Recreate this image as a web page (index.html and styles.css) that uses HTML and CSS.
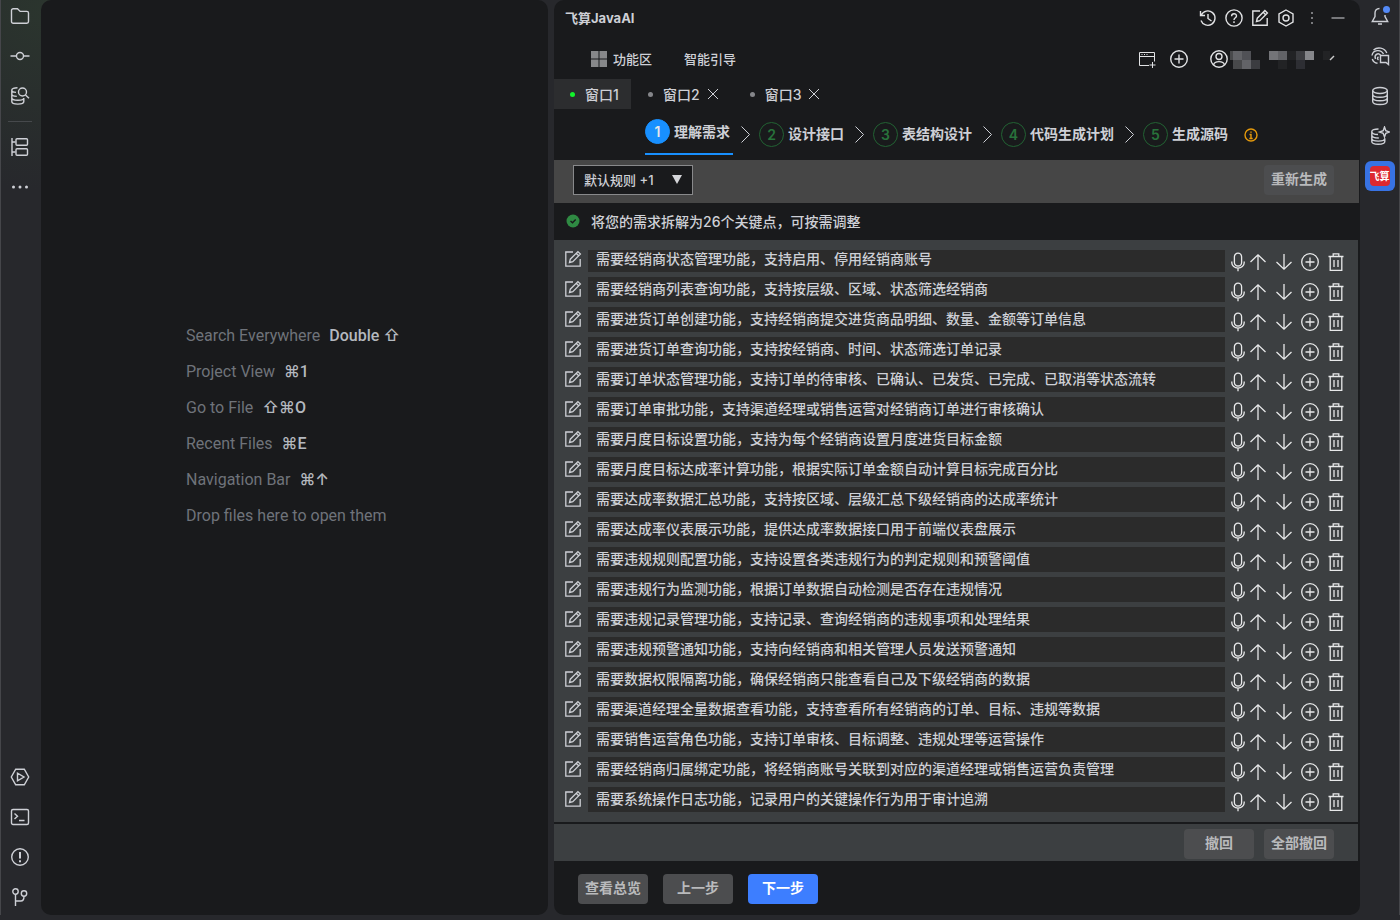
FILE: index.html
```html
<!DOCTYPE html>
<html lang="zh-CN">

<head>
    <meta charset="UTF-8">
    <meta name="viewport" content="width=device-width, initial-scale=1.0">
    <title>飞算JavaAI</title>
    <link rel="stylesheet" href="styles.css">
</head>

<body>
    <!-- icons -->
    <svg class="sprite" aria-hidden="true">
        <symbol id="i-edit" viewBox="0 0 18 18">
            <path d="M9 2H1.8v14.2h14.4V9" />
            <path d="M5.5 12.5l.8-3.3 7.6-7.6 2.5 2.5-7.6 7.6zM12.2 3.3l2.5 2.5" />
        </symbol>
        <symbol id="i-mic" viewBox="0 0 14 20">
            <rect x="3.4" y="1.2" width="7.2" height="12.8" rx="3.6" />
            <path d="M.8 9.5v1.2a6.2 5.4 0 0 0 12.4 0V9.5M7 16v3.2" />
        </symbol>
        <symbol id="i-up" viewBox="0 0 18 18">
            <path d="M9 17V2M1.5 9L9 1.8 16.5 9" />
        </symbol>
        <symbol id="i-down" viewBox="0 0 18 18">
            <path d="M9 1v15M1.5 9L9 16.2 16.5 9" />
        </symbol>
        <symbol id="i-plus" viewBox="0 0 18 18">
            <circle cx="9" cy="9" r="8.3" />
            <path d="M9 4.5v9M4.5 9h9" />
        </symbol>
        <symbol id="i-trash" viewBox="0 0 18 20">
            <path d="M1.5 4.5h15M3.2 4.5v13.8h11.6V4.5M6.2 4.5V1.8h5.6v2.7M7 8v7M11 8v7" />
        </symbol>
        <symbol id="i-arrow" viewBox="0 0 9 17">
            <path d="M.5.5l8 8-8 8" />
        </symbol>
        <symbol id="i-close" viewBox="0 0 12 12">
            <path d="M1 1l10 10M11 1L1 11" />
        </symbol>
    </svg>

    <div class="ide">
        <nav class="side left">
            <div class="group">
                <button aria-label="Project"><svg viewBox="0 0 20 20"><path d="M1.5 15.5v-11A1.7 1.7 0 0 1 3.2 2.8h4.3l2.7 2.6h6.6a1.7 1.7 0 0 1 1.7 1.7v8.4a1.7 1.7 0 0 1-1.7 1.7H3.2a1.7 1.7 0 0 1-1.7-1.7z" /></svg></button>
                <button aria-label="Commit"><svg viewBox="0 0 20 20"><circle cx="10" cy="10" r="3.5" /><path d="M.5 10h6M13.5 10h6" /></svg></button>
                <button aria-label="Database Search"><svg viewBox="0 0 20 20"><path d="M7.5 1.8C4 1.8 1.8 2.8 1.8 4v11.5c0 1.5 2.5 2.6 6 2.6s6-1.1 6-2.6v-3.3M1.8 4.2c0 1.2 1.7 2 4.2 2.2M1.8 8c0 1.2 2 2.2 5 2.4M1.8 11.7c0 1.5 2.5 2.5 6 2.5s6-1 6-2.3" /><circle cx="12.5" cy="6" r="4" /><path d="M15.5 9l3.500 3.300" /></svg></button>
                <hr>
                <button aria-label="Structure"><svg viewBox="0 0 20 20"><path d="M2 1v18M2 5h3.5M2 15h3.5" /><rect x="6" y="1.8" width="11.5" height="6.5" rx="1" /><rect x="6" y="11.7" width="11.5" height="6.5" rx="1" /></svg></button>
                <button aria-label="More"><svg viewBox="0 0 20 20"><g class="solid"><circle cx="3.5" cy="10" r="1.5" /><circle cx="10" cy="10" r="1.5" /><circle cx="16.5" cy="10" r="1.5" /></g></svg></button>
            </div>
            <div class="group">
                <button aria-label="Services"><svg viewBox="0 0 20 20"><path d="M5.7 2.2h8.6L18.7 10l-4.4 7.8H5.7L1.3 10zM7.5 6.2v7.6L14 10z" /></svg></button>
                <button aria-label="Terminal"><svg viewBox="0 0 20 20"><rect x="1.5" y="2.5" width="17" height="15" rx="1.5" /><path d="M4.5 6.5L7.5 9.2l-3 2.7M9 13.5h5.5" /></svg></button>
                <button aria-label="Problems"><svg viewBox="0 0 20 20"><circle cx="10" cy="10" r="8.3" /><path d="M10 5v6.5M10 13.2v2" class="thick" /></svg></button>
                <button aria-label="Git"><svg viewBox="0 0 20 20"><circle cx="5.5" cy="4.5" r="2.7" /><circle cx="14" cy="6.5" r="2.7" /><path d="M5.5 7.2V19M5.5 14h5.3c2 0 3.2-1.2 3.2-4.8" /></svg></button>
            </div>
        </nav>

        <main class="editor">
            <ul class="tips">
                <li>Search Everywhere <kbd>Double ⇧</kbd></li>
                <li>Project View <kbd>⌘1</kbd></li>
                <li>Go to File <kbd>⇧⌘O</kbd></li>
                <li>Recent Files <kbd>⌘E</kbd></li>
                <li>Navigation Bar <kbd>⌘↑</kbd></li>
                <li>Drop files here to open them</li>
            </ul>
        </main>

        <section class="panel">
            <header class="title">
                <h1>飞算JavaAI</h1>
                <div class="tools">
                    <button aria-label="历史"><svg viewBox="0 0 18 18"><path d="M2.3 6A7.2 7.2 0 1 1 2 11.5M1.5 2v4.5H6M9 5v4.5l3.5 2.5" /></svg></button>
                    <button aria-label="帮助"><svg viewBox="0 0 18 18"><circle cx="9" cy="9" r="8.1" /><path d="M6.6 7.2c0-3.4 4.9-3.2 4.9-.2 0 1.7-2.5 1.8-2.5 3.9M9 12.3v1.6" /></svg></button>
                    <button aria-label="编辑"><svg><use href="#i-edit" /></svg></button>
                    <button aria-label="设置"><svg viewBox="0 0 18 18"><path d="M9 1l7 3.8v8.4L9 17l-7-3.8V4.8z" /><circle cx="9" cy="9" r="3" /></svg></button>
                    <button aria-label="更多"><svg viewBox="0 0 18 18"><g class="solid dim"><circle cx="9" cy="4" r="1" /><circle cx="9" cy="9" r="1" /><circle cx="9" cy="14" r="1" /></g></svg></button>
                    <button aria-label="最小化"><svg viewBox="0 0 18 18"><path class="dimline" d="M2.5 9h13" /></svg></button>
                </div>
            </header>

            <div class="menu">
                <button class="area"><svg class="squares" viewBox="0 0 16 16"><path d="M0 0h7.5v7.5H0zM8.5 0H16v7.5H8.5zM0 8.5h7.5V16H0zM8.5 8.5H16V16H8.5z" /></svg>功能区</button>
                <button>智能引导</button>
                <div class="account">
                    <button aria-label="新建窗口"><svg class="thin" viewBox="0 0 18 18"><path d="M11 15.5H1.5v-13h15v9M1.5 6.5h15M3.5 4.5h1M6 4.5h1M8.5 4.5h1M14.5 12v6M11.500 15h6" /></svg></button>
                    <button aria-label="新增"><svg><use href="#i-plus" /></svg></button>
                    <button class="user" aria-label="账户">
                        <svg viewBox="0 0 18 18"><circle cx="9" cy="9" r="8.2" /><circle cx="9" cy="6.5" r="3" /><path d="M3.5 15c1-4.5 10-4.5 11 0" /></svg>
                        <svg class="mosaic" viewBox="0 0 105 18">
                            <path fill="#48494b" d="M0 0h3v9H0zM3 9h9v9H3z" />
                            <path fill="#626367" d="M3 0h9v9H3zM12 9h9v9h-9zM48 0h9v9h-9z" />
                            <path fill="#505156" d="M12 0h9v9h-9z" />
                            <path fill="#3b3c40" d="M21 9h9v9h-9zM66 0h9v9h-9z" />
                            <path fill="#737478" d="M39 0h9v9h-9z" />
                            <path fill="#222325" d="M57 0h9v9h-9zM48 9h9v9h-9zM93 0h7v9h-7z" />
                            <path fill="#2d2e33" d="M66 9h9v9h-9z" />
                            <path fill="#85868a" d="M75 0h9v9h-9z" />
                            <path d="M100 9l4-4" stroke="#ccc" />
                        </svg>
                    </button>
                </div>
            </div>

            <div class="tabs">
                <button class="tab active"><i></i>窗口1</button>
                <button class="tab"><i></i>窗口2<svg><use href="#i-close" /></svg></button>
                <button class="tab"><i></i>窗口3<svg><use href="#i-close" /></svg></button>
            </div>

            <div class="steps">
                <div class="step current"><b>1</b>理解需求</div>
                <svg class="arrow"><use href="#i-arrow" /></svg>
                <div class="step"><b>2</b><span>设计接口</span></div>
                <svg class="arrow"><use href="#i-arrow" /></svg>
                <div class="step"><b>3</b><span>表结构设计</span></div>
                <svg class="arrow"><use href="#i-arrow" /></svg>
                <div class="step"><b>4</b><span>代码生成计划</span></div>
                <svg class="arrow"><use href="#i-arrow" /></svg>
                <div class="step"><b>5</b><span>生成源码</span></div>
                <svg class="info" viewBox="0 0 14 14"><circle cx="7" cy="7" r="6" /><path d="M7 3.5v1.3M5.5 6.500H7v4M5.300 10.500h3.400" /></svg>
            </div>

            <div class="rules">
                <button class="select" aria-haspopup="listbox">默认规则 +1<span></span></button>
                <button class="btn faded">重新生成</button>
            </div>

            <div class="status">
                <svg viewBox="0 0 14 14"><circle cx="7" cy="7" r="6.5" /><path d="M4.5 7l2 1.8 3.2-3.3" /></svg>
                将您的需求拆解为26个关键点，可按需调整
            </div>

            <div class="listbox">
                <ul id="list"></ul>
            </div>

            <div class="undo">
                <button class="btn">撤回</button>
                <button class="btn">全部撤回</button>
            </div>

            <footer>
                <button class="btn">查看总览</button>
                <button class="btn">上一步</button>
                <button class="btn primary">下一步</button>
            </footer>
        </section>

        <nav class="side right">
            <div class="group">
                <button class="bell" aria-label="Notifications"><svg viewBox="0 0 20 20"><path d="M9.5 2.5C6.5 2.5 5 4.5 5 7v3.5L2.3 15.5h15.4L15 10.5V9M8 18h4" /></svg></button>
                <button aria-label="AI Assistant"><svg viewBox="0 0 20 20"><path d="M3.5 4C7.500.500 14.500 1.500 16.800 7M2 9.500C3 3.500 11 3 13.500 8M2.300 13c.8 2.500 2.700 4 5.200 4.300M5.500 13C3.800 9 8 6 10.500 9M8.500 14c-1.500-1-1.200-2.500 0-3" /><path d="M10.500 9.500h8v9l-2.500-2h-5.500z" /></svg></button>
                <button aria-label="Database"><svg viewBox="0 0 20 20"><ellipse cx="10" cy="4.5" rx="7.3" ry="3" /><path d="M2.7 4.5v11c0 4 14.6 4 14.6 0v-11M2.7 8.2c0 4 14.6 4 14.6 0M2.7 11.8c0 4 14.6 4 14.6 0" /></svg></button>
                <button aria-label="Database AI"><svg viewBox="0 0 20 20"><path d="M8.5 3C4.5 3 1.8 4 1.8 5.500v10c0 3.700 13 3.700 13 0v-3.200M1.800 5.500c0 2 3 3 6.200 3M1.800 9c0 2 3.500 3 7 3M1.800 12.500c0 3.500 13 3.500 13 0M14.500 1l1.300 3.700 3.700 1.300-3.700 1.300-1.300 3.700-1.300-3.700L9.500 6l3.700-1.300z" /></svg></button>
                <button class="logo" aria-label="飞算JavaAI"><span>飞算</span></button>
            </div>
        </nav>
    </div>

    <script src="script.js"></script>
</body>

</html>
```

FILE: styles.css
```css
* {
    box-sizing: border-box;
}

body {
    margin: 0;
    color: #ced0d6;
    background-color: #27282c;
    font-family: Inter, "Noto Sans CJK SC", sans-serif;
    font-size: 14px;
    font-weight: 500;
}

button {
    padding: 0;
    border: none;
    background: none;
    color: inherit;
    font: inherit;
    cursor: pointer;
}

svg {
    display: block;
    fill: none;
    stroke: currentColor;
    stroke-width: 1.4;
}

ul {
    margin: 0;
    padding: 0;
    list-style: none;
}

.sprite {
    position: absolute;
    width: 0;
    height: 0;
}

.solid {
    fill: currentColor;
    stroke: none;
}

.dim {
    fill: #9a9b9e;
}

.dimline {
    stroke: #77787b;
    stroke-width: 2;
}

.thick {
    stroke-width: 2;
}

.ide {
    display: grid;
    grid-template-columns: 41px 507fr 812fr 40px;
    min-height: 100vh;
    padding-bottom: 5px;
    background: radial-gradient(circle at 45px 10px, #2b352e 0, #27282c 180px);
}

/* side bars */
.side {
    display: flex;
    flex-direction: column;
    justify-content: space-between;
}

.left {
    border-left: 1px solid #45464a;
    padding-right: 2px;
}

.right {
    border-right: 1px solid #45464a;
}

.group {
    display: flex;
    flex-direction: column;
    align-items: center;
    gap: 10px;
    padding-top: 1px;
}

.left .group:last-child {
    padding-bottom: 3px;
}

.side button {
    display: flex;
    align-items: center;
    justify-content: center;
    width: 30px;
    height: 30px;
}

.side svg {
    width: 20px;
    height: 20px;
}

.side hr {
    width: 24px;
    height: 1px;
    margin: 0;
    border: none;
    background-color: #46494c;
}

.bell {
    position: relative;
}

.bell::after {
    content: "";
    position: absolute;
    top: 5px;
    right: 5px;
    width: 7px;
    height: 7px;
    border-radius: 50%;
    background-color: #548af7;
}

.side .logo {
    border-radius: 6px;
    background-color: #3873e4;
}

.logo span {
    width: 20px;
    height: 20px;
    border-radius: 4px;
    background-color: #dd2930;
    color: white;
    font-size: 10px;
    font-weight: bold;
    line-height: 20px;
}

/* editor */
.editor {
    display: flex;
    align-items: center;
    justify-content: center;
    border-radius: 10px;
    background-color: #191a1c;
}

.tips {
    padding-bottom: 64px;
    width: 217px;
    color: #6f737a;
    font-family: Roboto, Inter, sans-serif;
    font-size: 16px;
    font-weight: normal;
    line-height: 36px;
    white-space: nowrap;
}

.tips kbd {
    margin-left: 5px;
    color: #b4b8bf;
    font-family: inherit;
    font-weight: 500;
}

/* plugin panel */
.panel {
    display: flex;
    flex-direction: column;
    margin-left: 6px;
    border-radius: 10px;
    background-color: #191a1c;
    overflow: hidden;
}

.title {
    display: flex;
    align-items: center;
    justify-content: space-between;
    height: 36px;
    padding: 0 13px 0 11px;
}

h1 {
    margin: 0;
    padding-bottom: 2px;
    font-size: 13px;
}

.tools,
.account {
    color: #e1e2e4;
}

.tools {
    display: flex;
    gap: 8px;
}

.tools svg,
.account svg {
    width: 18px;
    height: 18px;
}

.menu {
    display: flex;
    align-items: center;
    gap: 32px;
    height: 43px;
    padding: 2px 25px 0 37px;
    font-size: 13px;
}

.area {
    display: flex;
    align-items: center;
    gap: 6px;
}

.squares {
    width: 16px;
    height: 16px;
    fill: #87888a;
    stroke: none;
}

.account {
    display: flex;
    gap: 14px;
    margin-left: auto;
}

.account .thin {
    stroke-width: 1;
}

.user {
    display: flex;
    align-items: center;
    gap: 2px;
    margin-left: 8px;
}

.account .mosaic {
    width: 105px;
    height: 18px;
    margin-top: 3px;
    stroke: none;
}

.tabs {
    display: flex;
    gap: 17px;
    height: 30px;
}

.tab {
    display: flex;
    align-items: center;
}

.tab.active {
    width: 77px;
    padding-left: 16px;
    background-color: #2c2d2f;
}

.tab i {
    width: 5px;
    height: 5px;
    margin-right: 10px;
    border-radius: 50%;
    background-color: #85868a;
}

.tab.active i {
    background-color: #12f32b;
}

.tab svg {
    width: 12px;
    height: 12px;
    margin: 0 14px 0 7px;
    stroke-width: 1;
}

.steps {
    display: flex;
    align-items: center;
    justify-content: center;
    height: 51px;
    padding-right: 11px;
    font-weight: bold;
}

.step {
    display: flex;
    align-items: center;
    gap: 4px;
    padding-right: 3px;
}

.step span {
    padding-bottom: 3px;
}

.step b {
    width: 25px;
    height: 25px;
    border: 1px solid #226233;
    border-radius: 50%;
    color: #28733b;
    font-weight: 600;
    line-height: 23px;
    text-align: center;
}

.step.current {
    align-self: flex-end;
    height: 46px;
    margin-bottom: 5px;
    border-bottom: 2px solid #1890ff;
}

.step.current b {
    border-color: #1890ff;
    background-color: #1890ff;
    color: #e4e6ea;
}

.arrow {
    width: 9px;
    height: 17px;
    margin: 0 9px 0 8px;
    stroke-width: 1;
}

.info {
    width: 14px;
    height: 14px;
    margin-left: 13px;
    stroke: #e59a0c;
}

.rules {
    display: flex;
    align-items: center;
    justify-content: space-between;
    height: 43px;
    margin-right: 1px;
    padding: 0 25px 3px 19px;
    background-color: #464646;
}

.select {
    display: flex;
    align-items: center;
    justify-content: space-between;
    width: 120px;
    height: 30px;
    padding: 0 10px 2px;
    border: 1px solid #88898b;
    background-color: #191a1c;
    font-size: 13px;
}

.select span {
    border: 5px solid transparent;
    border-top: 9px solid #d5d6d9;
    border-bottom: none;
}

.btn {
    width: 70px;
    height: 30px;
    padding-bottom: 4px;
    border-radius: 4px;
    background-color: #4c4d4f;
    color: #b9babc;
    font-weight: bold;
}

.btn.primary {
    background-color: #3d7eff;
    color: white;
}

.status {
    display: flex;
    align-items: center;
    gap: 11px;
    height: 37px;
    padding: 0 0 2px 12px;
}

.status svg {
    width: 14px;
    height: 14px;
}

.status circle {
    fill: #2f8a43;
    stroke: none;
}

.status path {
    stroke: #191a1c;
}

/* requirements */
.listbox {
    flex: 1;
    margin: 0 2px 2px 0;
    padding: 10px 13px 10px 10px;
    background-color: #3c3f41;
}

#list {
    overflow: hidden;
}

/* the list is scrolled by a few pixels */
#list li:first-child {
    margin-top: -3px;
}

#list li {
    display: flex;
    align-items: center;
    height: 25px;
    margin-bottom: 5px;
}

#list li:last-child {
    margin-bottom: 0;
}

#list input {
    flex: 1;
    min-width: 0;
    height: 25px;
    margin: 0 6px;
    padding: 0 8px 3px;
    border: none;
    outline: none;
    background-color: #2b2b2b;
    color: inherit;
    font: inherit;
}

#list svg {
    width: 18px;
    height: 18px;
    stroke-width: 1.3;
}

#list .edit {
    padding-bottom: 2px;
}

#list .actions {
    display: flex;
    align-items: center;
    gap: 8px;
    padding-top: 5px;
    color: #e8e9ea;
}

#list .mic {
    margin-right: -4px;
}

#list .mic svg {
    width: 14px;
    height: 20px;
}

#list .trash svg {
    height: 20px;
}

.undo {
    display: flex;
    justify-content: flex-end;
    gap: 10px;
    height: 37px;
    margin-right: 2px;
    padding: 5px 24px 0 0;
    background-color: #3c3f41;
}

footer {
    display: flex;
    gap: 15px;
    height: 54px;
    padding: 13px 0 0 24px;
}
```

FILE: script.js
```js
const list = document.getElementById('list');

const items = [
    '需要经销商状态管理功能，支持启用、停用经销商账号',
    '需要经销商列表查询功能，支持按层级、区域、状态筛选经销商',
    '需要进货订单创建功能，支持经销商提交进货商品明细、数量、金额等订单信息',
    '需要进货订单查询功能，支持按经销商、时间、状态筛选订单记录',
    '需要订单状态管理功能，支持订单的待审核、已确认、已发货、已完成、已取消等状态流转',
    '需要订单审批功能，支持渠道经理或销售运营对经销商订单进行审核确认',
    '需要月度目标设置功能，支持为每个经销商设置月度进货目标金额',
    '需要月度目标达成率计算功能，根据实际订单金额自动计算目标完成百分比',
    '需要达成率数据汇总功能，支持按区域、层级汇总下级经销商的达成率统计',
    '需要达成率仪表展示功能，提供达成率数据接口用于前端仪表盘展示',
    '需要违规规则配置功能，支持设置各类违规行为的判定规则和预警阈值',
    '需要违规行为监测功能，根据订单数据自动检测是否存在违规情况',
    '需要违规记录管理功能，支持记录、查询经销商的违规事项和处理结果',
    '需要违规预警通知功能，支持向经销商和相关管理人员发送预警通知',
    '需要数据权限隔离功能，确保经销商只能查看自己及下级经销商的数据',
    '需要渠道经理全量数据查看功能，支持查看所有经销商的订单、目标、违规等数据',
    '需要销售运营角色功能，支持订单审核、目标调整、违规处理等运营操作',
    '需要经销商归属绑定功能，将经销商账号关联到对应的渠道经理或销售运营负责管理',
    '需要系统操作日志功能，记录用户的关键操作行为用于审计追溯'
];

const icon = (name, label) =>
    `<button class="${name}" aria-label="${label}"><svg><use href="#i-${name}" /></svg></button>`;

list.innerHTML = items.map((text, i) => `
    <li>
        ${icon('edit', '编辑')}
        <input type="text" aria-label="关键点${i + 1}" value="${text}">
        <div class="actions">
            ${icon('mic', '语音')}
            ${icon('up', '上移')}
            ${icon('down', '下移')}
            ${icon('plus', '新增')}
            ${icon('trash', '删除')}
        </div>
    </li>`).join('');
```
